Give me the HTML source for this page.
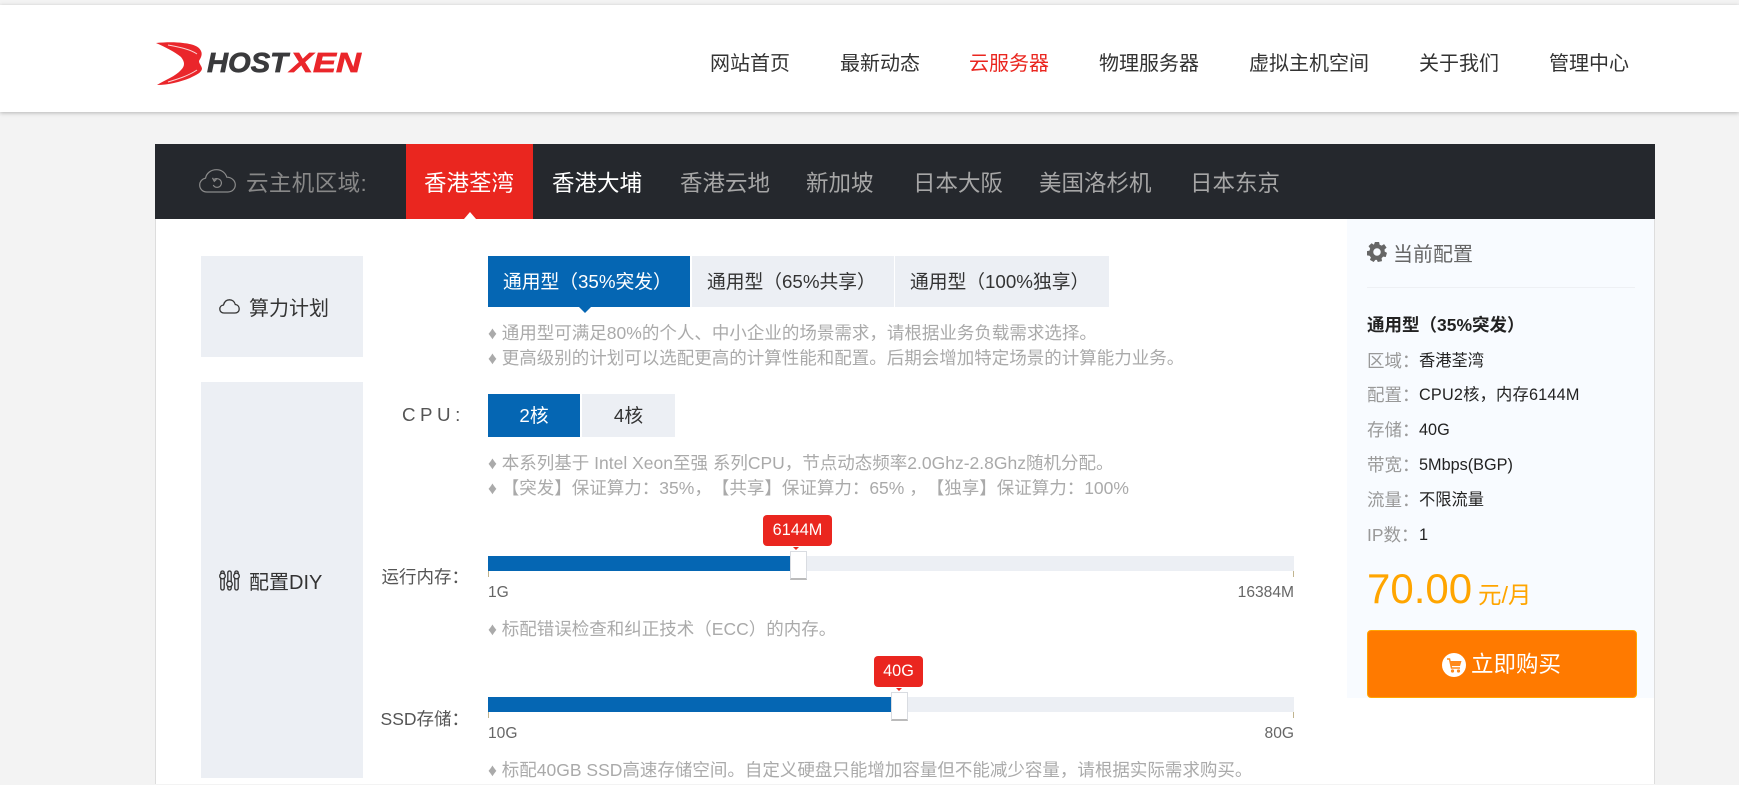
<!DOCTYPE html>
<html lang="zh-CN">
<head>
<meta charset="utf-8">
<title>HostXen</title>
<style>
html,body{margin:0;padding:0;background:#f3f3f3;}
body{width:1739px;height:784px;position:relative;overflow:hidden;font-family:"Liberation Sans","Noto Sans CJK SC",sans-serif;text-spacing-trim:space-all;}
.b{position:absolute;}
.t{position:absolute;white-space:nowrap;line-height:30px;height:30px;}
.c{text-align:center;}
.nav{font-size:20px;color:#333;top:49px;}
.tab{font-size:22.5px;color:#a6a6a6;top:169px;}
.opt{font-size:18.75px;color:#333;background:#eceff4;line-height:51px;}
.on{background:#0566b3;color:#fff;}
.d{font-size:17.5px;color:#aaa;left:488px;}
.lab{font-size:17.5px;color:#555;text-align:right;right:1270px;}
.sm{font-size:15.6px;color:#666;}
.k{font-size:17.5px;color:#999;left:1367px;}
.v{font-size:16.25px;color:#222;left:1419px;}
.track{background:#eceff4;left:488px;width:806px;height:15px;}
.fill{background:#0566b3;left:488px;height:15px;}
.tick{width:1px;height:6px;background:#c0b48f;}
.h{width:15px;height:26px;background:#fff;border:1px solid #d9dce1;border-bottom:2px solid #bbb;box-sizing:content-box;}
.bub{background:#ea261f;color:#fff;border-radius:4px;font-size:16.25px;line-height:31px;height:31px;text-align:center;}
.arr{width:0;height:0;border-left:3px solid transparent;border-right:3px solid transparent;border-top:3px solid #ea261f;}
</style>
</head>
<body>
<div class="b" style="left:0;top:5px;width:1739px;height:107px;background:#fff;box-shadow:0 1px 4px rgba(0,0,0,.26);"></div>

<svg class="b" style="left:150px;top:36px" width="215" height="54" viewBox="0 0 215 54">
<path d="M6 7C16 6 26 6 33 7C42 8 49 10 51 15C53 19 50 23 49 25C49 28 52 30 52 33C51 37 46 39 40 42C30 46 18 49 7 49C15 44 26 40 31 34C35 30 35 26 31 21C25 16 15 11 6 7Z" fill="#ea262b"/>
<path d="M18 9C28 11 40 13 47 18" stroke="#fff" stroke-width="1" fill="none" opacity=".8"/>
<path d="M18 46C28 43 38 40 47 34" stroke="#fff" stroke-width="1" fill="none" opacity=".8"/>
<text x="57" y="36" font-family="Liberation Sans" font-weight="700" font-style="italic" font-size="28" fill="#3a3a3c" stroke="#3a3a3c" stroke-width=".7" textLength="81" lengthAdjust="spacingAndGlyphs">HOST</text>
<text x="140" y="36" font-family="Liberation Sans" font-weight="700" font-style="italic" font-size="28" fill="#ea262b" stroke="#ea262b" stroke-width=".7" textLength="71" lengthAdjust="spacingAndGlyphs">XEN</text>
</svg>

<div class="t nav" style="left:710px">网站首页</div>
<div class="t nav" style="left:840px">最新动态</div>
<div class="t nav" style="left:969px;color:#ea261f">云服务器</div>
<div class="t nav" style="left:1099px">物理服务器</div>
<div class="t nav" style="left:1249px">虚拟主机空间</div>
<div class="t nav" style="left:1419px">关于我们</div>
<div class="t nav" style="left:1549px">管理中心</div>

<!-- main panel -->
<div class="b" style="left:155px;top:219px;width:1498px;height:565px;background:#fff;border-left:1px solid #ddd;border-right:1px solid #ddd;"></div>
<div class="b" style="left:155px;top:144px;width:1500px;height:75px;background:#25282d;"></div>
<div class="b" style="left:406px;top:144px;width:127px;height:75px;background:#ea261f;"></div>
<div class="b" style="left:464px;top:212px;width:0;height:0;border-left:6px solid transparent;border-right:6px solid transparent;border-bottom:7px solid #fff;"></div>

<svg class="b" style="left:199px;top:169px" width="37" height="24" viewBox="0 0 37 24" fill="none" stroke="#8b8b8b" stroke-width="1.2">
<path d="M8 23C3.500 23 .7 19.800 .7 16C.7 12.500 3.200 9.800 6.500 9.200C7.500 4 12 .7 17.500 .7C22.500 .7 26.500 3.800 27.800 8.200C32.500 8.200 36.300 11.500 36.300 15.800C36.300 20 33 23 28.800 23Z"/>
<path d="M15 10.500C16.500 9.200 20 9.300 21.500 11.300C23.500 14 22 18 18.500 18.300C16.500 18.500 15 17.500 14.300 16"/>
<path d="M13.500 8.800L15.300 12.300L17.500 10.300"/>
</svg>
<div class="t tab" style="left:246px;color:#888;letter-spacing:.4px">云主机区域:</div>
<div class="t tab" style="left:424px;color:#fff">香港荃湾</div>
<div class="t tab" style="left:552px;color:#fff">香港大埔</div>
<div class="t tab" style="left:680px">香港云地</div>
<div class="t tab" style="left:806px">新加坡</div>
<div class="t tab" style="left:913px">日本大阪</div>
<div class="t tab" style="left:1039px">美国洛杉机</div>
<div class="t tab" style="left:1190px">日本东京</div>

<!-- left blocks -->
<div class="b" style="left:201px;top:256px;width:162px;height:101px;background:#eceff4;"></div>
<div class="b" style="left:201px;top:382px;width:162px;height:396px;background:#eceff4;"></div>
<svg class="b" style="left:219px;top:299px" width="21" height="15" viewBox="0 0 21 15" fill="none" stroke="#333" stroke-width="1.300">
<path d="M5 14C2.500 14 .8 12.300 .8 10C.8 7.800 2.300 6.300 4.500 6C5.300 2.800 7.500 .8 10.500 .8C13.500 .8 15.600 2.800 16.300 5.500C18.600 5.800 20.200 7.500 20.200 10C20.200 12.300 18.500 14 16 14Z"/>
</svg>
<div class="t" style="left:249px;top:294px;font-size:20px;color:#333">算力计划</div>
<svg class="b" style="left:219px;top:570px" width="21" height="21" viewBox="0 0 21 21" fill="none" stroke="#333" stroke-width="1.300">
<rect x="1.800" y="1" width="3.400" height="19" rx="1.700"/><circle cx="3.500" cy="6" r="2.800" fill="#eceff4"/>
<rect x="8.800" y="1" width="3.400" height="19" rx="1.700"/><circle cx="10.500" cy="14" r="2.800" fill="#eceff4"/>
<rect x="15.800" y="1" width="3.400" height="19" rx="1.700"/><circle cx="17.500" cy="6" r="2.800" fill="#eceff4"/>
</svg>
<div class="t" style="left:249px;top:568px;font-size:20px;color:#333">配置DIY</div>

<!-- plan options -->
<div class="b opt on" style="left:488px;top:256px;width:187px;height:51px;padding-left:15px;">通用型（35%突发）</div>
<div class="b" style="left:579px;top:307px;width:0;height:0;border-left:6px solid transparent;border-right:6px solid transparent;border-top:6px solid #0566b3;"></div>
<div class="b opt" style="left:692px;top:256px;width:187px;height:51px;padding-left:15px;">通用型（65%共享）</div>
<div class="b opt" style="left:895px;top:256px;width:199px;height:51px;padding-left:15px;">通用型（100%独享）</div>
<div class="t d" style="top:318px">♦ 通用型可满足80%的个人、中小企业的场景需求，请根据业务负载需求选择。</div>
<div class="t d" style="top:343px">♦ 更高级别的计划可以选配更高的计算性能和配置。后期会增加特定场景的计算能力业务。</div>

<!-- cpu -->
<div class="t" style="left:402px;top:400px;font-size:18.75px;letter-spacing:4.500px;color:#555">CPU:</div>
<div class="b opt on c" style="left:488px;top:394px;width:92px;height:43px;line-height:43px;">2核</div>
<div class="b opt c" style="left:582px;top:394px;width:93px;height:43px;line-height:43px;">4核</div>
<div class="t d" style="top:448px">♦ 本系列基于 Intel Xeon至强 系列CPU，节点动态频率2.0Ghz-2.8Ghz随机分配。</div>
<div class="t d" style="top:473px">♦ 【突发】保证算力：35%，【共享】保证算力：65% ，【独享】保证算力：100%</div>

<!-- memory slider -->
<div class="t lab" style="top:562px">运行内存：</div>
<div class="b track" style="top:556px"></div>
<div class="b fill" style="top:556px;width:302px"></div>
<div class="b tick" style="left:488px;top:571px"></div>
<div class="b tick" style="left:1293px;top:571px"></div>
<div class="b h" style="left:790px;top:551px"></div>
<div class="b bub" style="left:763px;top:515px;width:69px">6144M</div>
<div class="b arr" style="left:793px;top:547px"></div>
<div class="t sm" style="left:488px;top:578px">1G</div>
<div class="t sm" style="right:445px;top:578px">16384M</div>
<div class="t d" style="top:614px">♦ 标配错误检查和纠正技术（ECC）的内存。</div>

<!-- ssd slider -->
<div class="t lab" style="top:704px">SSD存储：</div>
<div class="b track" style="top:697px"></div>
<div class="b fill" style="top:697px;width:403px"></div>
<div class="b tick" style="left:488px;top:712px"></div>
<div class="b tick" style="left:1293px;top:712px"></div>
<div class="b h" style="left:891px;top:692px"></div>
<div class="b bub" style="left:874px;top:656px;width:49px">40G</div>
<div class="b arr" style="left:896px;top:688px"></div>
<div class="t sm" style="left:488px;top:719px">10G</div>
<div class="t sm" style="right:445px;top:719px">80G</div>
<div class="t d" style="top:755px">♦ 标配40GB SSD高速存储空间。自定义硬盘只能增加容量但不能减少容量，请根据实际需求购买。</div>

<!-- sidebar -->
<div class="b" style="left:1347px;top:219px;width:307px;height:479px;background:#f8fbff;"></div>
<svg class="b" style="left:1367px;top:242px" width="20" height="20" viewBox="0 0 24 24">
<path fill="#666" fill-rule="evenodd" d="M9.500 0H14.500L15.200 3.300L17.600 4.400L20.500 2.600L23.500 6.800L21 9L21.300 11.500L24 13L22.500 18L19.300 17.500L17.500 19.500L18 23L13 24L11.800 21.500H10L8 24L3.500 21.500L4.700 18.500L3 16.500L0 16L0 11L3 10.300L3.800 7.800L1.800 5L5.500 1.500L8.300 3.300Z M12 7.500A4.500 4.500 0 1 0 12 16.500A4.500 4.500 0 1 0 12 7.500Z"/>
</svg>
<div class="t" style="left:1393px;top:240px;font-size:20px;color:#666">当前配置</div>
<div class="b" style="left:1367px;top:287px;width:268px;height:1px;background:#eef0f4;"></div>
<div class="t" style="left:1367px;top:310px;font-size:17.5px;font-weight:700;color:#222">通用型（35%突发）</div>
<div class="t k" style="top:346px">区域：</div><div class="t v" style="top:346px">香港荃湾</div>
<div class="t k" style="top:380px">配置：</div><div class="t v" style="top:380px;letter-spacing:.2px">CPU2核，内存6144M</div>
<div class="t k" style="top:415px">存储：</div><div class="t v" style="top:415px">40G</div>
<div class="t k" style="top:450px">带宽：</div><div class="t v" style="top:450px">5Mbps(BGP)</div>
<div class="t k" style="top:485px">流量：</div><div class="t v" style="top:485px">不限流量</div>
<div class="t k" style="top:520px">IP数：</div><div class="t v" style="top:520px">1</div>
<div class="t" style="left:1367px;top:574px;font-size:42px;color:#ffa500">70.00</div>
<div class="t" style="left:1478px;top:580px;font-size:23.500px;color:#ffa500">元/月</div>
<div class="b" style="left:1367px;top:630px;width:268px;height:66px;background:#ff7a00;border:1px solid #ffa500;border-radius:4px;"></div>
<svg class="b" style="left:1442px;top:653px" width="24" height="24" viewBox="0 0 24 24">
<circle cx="12" cy="12" r="12" fill="#fff"/>
<path d="M5 6H7.500L9.500 15H18" fill="none" stroke="#ff8a1a" stroke-width="1.500"/>
<path d="M8 8H19.500L18 13H9Z" fill="#ff8a1a"/>
<circle cx="10.500" cy="18" r="1.600" fill="#ff8a1a"/><circle cx="16.500" cy="18" r="1.600" fill="#ff8a1a"/>
</svg>
<div class="t" style="left:1471px;top:650px;font-size:22.5px;color:#fff">立即购买</div>
</body>
</html>
